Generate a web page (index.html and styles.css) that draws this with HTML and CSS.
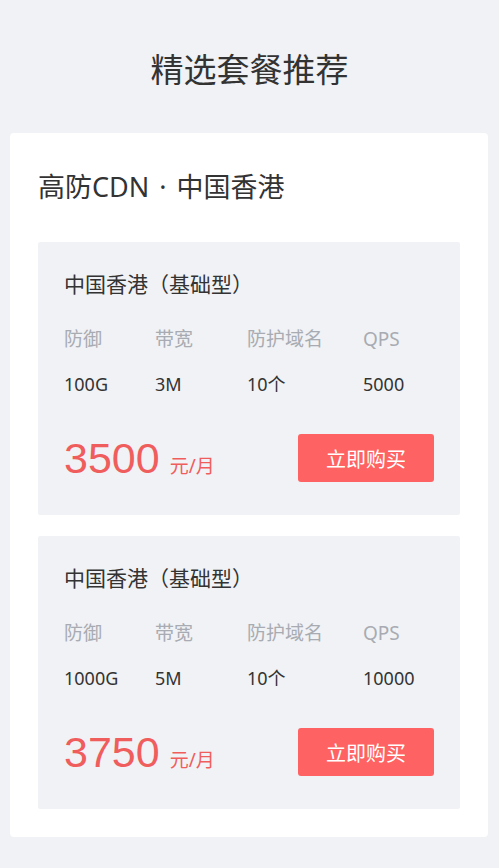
FILE: index.html
```html
<!DOCTYPE html>
<html lang="zh-CN">
<head>
  <meta charset="UTF-8" />
  <meta name="viewport" content="width=device-width, initial-scale=1.0"/>
  <title>精选套餐推荐</title>
  <link rel="stylesheet" href="styles.css">
</head>
<body>

  <h1>精选套餐推荐</h1>

  <div class="card">
    <h2>高防CDN · 中国香港</h2>

    <div class="plan">
      <h3>中国香港（基础型）</h3>
      <div class="specs">
        <span class="label">防御</span>
        <span class="label">带宽</span>
        <span class="label">防护域名</span>
        <span class="label">QPS</span>
        <span class="value">100G</span>
        <span class="value">3M</span>
        <span class="value">10个</span>
        <span class="value">5000</span>
      </div>
      <div class="price-row">
        <div class="price"><span class="num">3500</span> <span class="unit">元/月</span></div>
        <button class="buy">立即购买</button>
      </div>
    </div>

    <div class="plan">
      <h3>中国香港（基础型）</h3>
      <div class="specs">
        <span class="label">防御</span>
        <span class="label">带宽</span>
        <span class="label">防护域名</span>
        <span class="label">QPS</span>
        <span class="value">1000G</span>
        <span class="value">5M</span>
        <span class="value">10个</span>
        <span class="value">10000</span>
      </div>
      <div class="price-row">
        <div class="price"><span class="num">3750</span> <span class="unit">元/月</span></div>
        <button class="buy">立即购买</button>
      </div>
    </div>
  </div>

</body>
</html>
```

FILE: styles.css
```css
body {
  font-family: "Noto Sans", "Noto Sans CJK SC", sans-serif;
  background: #f0f2f5;
  margin: 0;
  padding: 0;
  color: #333;
  text-spacing-trim: space-all;
}

h1 {
  margin: 0;
  padding: 50px 0 43px;
  text-align: center;
  font-size: 33px;
  line-height: 40px;
  font-weight: normal;
  color: #333;
}

.card {
  margin: 0 11px 0 10px;
  padding: 38px 28px 28px;
  background: #fff;
  border-radius: 4px;
}

.card h2 {
  margin: 0 0 39px;
  font-size: 27px;
  line-height: 32px;
  font-weight: normal;
  word-spacing: 3px;
  color: #333;
}

.plan {
  background: #f0f2f5;
  padding: 28px 26px 33px;
  border-radius: 2px;
}

.plan + .plan {
  margin-top: 21px;
}

.plan h3 {
  margin: 0;
  font-size: 21px;
  line-height: 28px;
  font-weight: normal;
  color: #333;
}

.specs {
  display: grid;
  grid-template-columns: 91px 92px 116px 1fr;
  row-gap: 21px;
  margin-top: 29px;
  font-size: 18px;
  line-height: 24px;
}

.specs .label {
  color: #a8abb2;
  font-size: 19px;
}

.specs .value {
  color: #333;
}

.price-row {
  display: flex;
  justify-content: space-between;
  align-items: center;
  margin-top: 38px;
}

.price {
  color: #f05d5d;
  display: flex;
  align-items: baseline;
  gap: 10px;
}

.price .num {
  font-family: "Liberation Sans", Arial, sans-serif;
  font-size: 43px;
  line-height: 48px;
}

.price .unit {
  font-size: 19px;
}

.buy {
  width: 136px;
  height: 48px;
  border: none;
  border-radius: 3px;
  background: #ff6262;
  color: #fff;
  font-family: inherit;
  font-size: 20px;
  cursor: pointer;
}
```
